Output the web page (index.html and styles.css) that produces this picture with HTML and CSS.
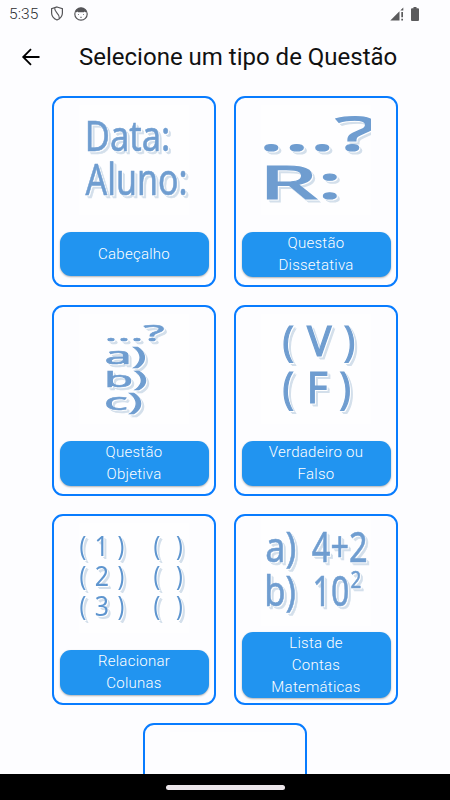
FILE: index.html
```html
<!DOCTYPE html>
<html lang="pt-BR">
<head>
<meta charset="utf-8">
<title>Selecione um tipo de Questão</title>
<link rel="stylesheet" href="styles.css">
</head>
<body>
<div class="screen">
  <header class="status">
    <span class="clock">5:35</span>
    <svg class="shield" width="14" height="15" viewBox="0 0 14 15"><path d="M7 1 12.400 2.700V7c0 3.400-2.200 5.700-5.400 7C3.800 12.700 1.600 10.400 1.600 7V2.700Z"/><path d="M4.800 2.200C3.800 6 9.600 7 9.300 12"/></svg>
    <svg class="face" width="14" height="14" viewBox="0 0 14 14"><circle cx="7" cy="7" r="6.200"/><path class="solid" d="M1.500 5C2 2.500 4.300.8 7 .8s5 1.700 5.500 4.200l-1.300.3-.7-.8-.6.7H4.100l-.6-.7-.7.8Z"/><path class="thin" d="M4.500 7v1M9.500 7v1M6 10.300h2"/></svg>
    <svg class="signal" width="14" height="14" viewBox="0 0 14 14"><path d="M.3 13.500 9.500 4.300v9.200ZM10.500 3.300 13.300.5v3h-2.800ZM11.300 5h1.700v5.300h-1.700ZM11.300 11.800h1.700v1.700h-1.700Z"/></svg>
    <svg class="battery" width="8" height="14" viewBox="0 0 8 14"><path d="M2.500 0h3v1.300H7q1 0 1 1V13q0 1-1 1H1q-1 0-1-1V2.300q0-1 1-1h1.500Z"/></svg>
  </header>
  <nav class="appbar">
    <svg class="back" width="20" height="18" viewBox="0 0 20 18"><path d="M18.500 9H2.200M10 1.200 2.200 9l7.800 7.800"/></svg>
    <h1>Selecione um tipo de Questão</h1>
  </nav>
  <main class="cards">
    <section class="card">
      <svg class="art" viewBox="0 0 110 110"><g>
        <text x="5.700" y="45.500" font-size="42" textLength="85.600" lengthAdjust="spacingAndGlyphs">Data:</text>
        <text x="6.600" y="90" font-size="43" textLength="102" lengthAdjust="spacingAndGlyphs">Aluno:</text>
      </g></svg>
      <button>Cabeçalho</button>
    </section>
    <section class="card">
      <svg class="art bold" viewBox="0 0 110 110"><g>
        <text x="-2.500" y="45.600" font-size="47" textLength="118" lengthAdjust="spacingAndGlyphs">...?</text>
        <text x="-2.100" y="94" font-size="46" textLength="83.500" lengthAdjust="spacingAndGlyphs">R:</text>
      </g></svg>
      <button>Questão<br>Dissetativa</button>
    </section>
    <section class="card">
      <svg class="art" viewBox="0 0 110 110"><g>
        <text x="25.600" y="27" font-size="22" textLength="60" lengthAdjust="spacingAndGlyphs">...?</text>
        <text x="25.400" y="49.700" font-size="23" textLength="42" lengthAdjust="spacingAndGlyphs">a)</text>
        <text x="25" y="73" font-size="22" textLength="43.500" lengthAdjust="spacingAndGlyphs">b)</text>
        <text x="25" y="95.700" font-size="23" textLength="38.700" lengthAdjust="spacingAndGlyphs">c)</text>
      </g></svg>
      <button>Questão<br>Objetiva</button>
    </section>
    <section class="card">
      <svg class="art bold" viewBox="0 0 110 110"><g>
        <text x="21.600" y="42.300" font-size="42" textLength="11.400" lengthAdjust="spacingAndGlyphs">(</text>
        <text x="45.900" y="42.300" font-size="42" textLength="24.500" lengthAdjust="spacingAndGlyphs">V</text>
        <text x="82.700" y="42.300" font-size="42" textLength="11.400" lengthAdjust="spacingAndGlyphs">)</text>
        <text x="21.600" y="88.500" font-size="43" textLength="11.400" lengthAdjust="spacingAndGlyphs">(</text>
        <text x="45.700" y="88.500" font-size="43" textLength="21" lengthAdjust="spacingAndGlyphs">F</text>
        <text x="78.400" y="88.500" font-size="43" textLength="11.400" lengthAdjust="spacingAndGlyphs">)</text>
      </g></svg>
      <button>Verdadeiro ou<br>Falso</button>
    </section>
    <section class="card">
      <svg class="art light" viewBox="0 0 110 110"><g>
        <text x=".6" y="32.700" font-size="28" textLength="6.800" lengthAdjust="spacingAndGlyphs">(</text>
        <text x="15.600" y="32.700" font-size="28" textLength="14.300" lengthAdjust="spacingAndGlyphs">1</text>
        <text x="38.600" y="32.700" font-size="28" textLength="6.800" lengthAdjust="spacingAndGlyphs">)</text>
        <text x="74.400" y="32.700" font-size="28" textLength="6.800" lengthAdjust="spacingAndGlyphs">(</text>
        <text x="97.100" y="32.700" font-size="28" textLength="6.800" lengthAdjust="spacingAndGlyphs">)</text>
        <text x=".6" y="62.700" font-size="28" textLength="6.800" lengthAdjust="spacingAndGlyphs">(</text>
        <text x="15.700" y="62.700" font-size="28" textLength="14.300" lengthAdjust="spacingAndGlyphs">2</text>
        <text x="38.600" y="62.700" font-size="28" textLength="6.800" lengthAdjust="spacingAndGlyphs">)</text>
        <text x="74.400" y="62.700" font-size="28" textLength="6.800" lengthAdjust="spacingAndGlyphs">(</text>
        <text x="97.100" y="62.700" font-size="28" textLength="6.800" lengthAdjust="spacingAndGlyphs">)</text>
        <text x=".6" y="92.500" font-size="28" textLength="6.800" lengthAdjust="spacingAndGlyphs">(</text>
        <text x="15.700" y="92.500" font-size="28" textLength="14.300" lengthAdjust="spacingAndGlyphs">3</text>
        <text x="38.600" y="92.500" font-size="28" textLength="6.800" lengthAdjust="spacingAndGlyphs">)</text>
        <text x="74.400" y="92.500" font-size="28" textLength="6.800" lengthAdjust="spacingAndGlyphs">(</text>
        <text x="97.100" y="92.500" font-size="28" textLength="6.800" lengthAdjust="spacingAndGlyphs">)</text>
      </g></svg>
      <button>Relacionar<br>Colunas</button>
    </section>
    <section class="card tall">
      <svg class="art" viewBox="0 0 110 110"><g>
        <text x="4.300" y="46" font-size="42" textLength="31" lengthAdjust="spacingAndGlyphs">a)</text>
        <text x="50.800" y="46" font-size="42" textLength="55.800" lengthAdjust="spacingAndGlyphs">4+2</text>
        <text x="3.300" y="89.700" font-size="42" textLength="31.700" lengthAdjust="spacingAndGlyphs">b)</text>
        <text x="51.600" y="89.700" font-size="42" textLength="36.600" lengthAdjust="spacingAndGlyphs">10</text>
        <text x="89.500" y="71.500" font-size="24" textLength="10.800" lengthAdjust="spacingAndGlyphs">2</text>
      </g></svg>
      <button>Lista de<br>Contas<br>Matemáticas</button>
    </section>
    <section class="card">
      <svg class="art" viewBox="0 0 110 110"></svg>
    </section>
  </main>
  <footer class="navbar"><span class="handle"></span></footer>
</div>
</body>
</html>
```
FILE: styles.css
```css
* { box-sizing: border-box; }
body { margin: 0; font-family: Roboto, sans-serif; background: #fdfdff; }
.screen { width: 450px; height: 800px; display: flex; flex-direction: column; overflow: hidden; }

.status { height: 27px; flex: none; display: flex; align-items: center; padding: 0 31px 0 9px; }
.status svg { fill: #5a5a5c; flex: none; }
.clock { width: 41px; font-size: 15.5px; font-weight: 300; letter-spacing: .1px; color: #2c2c30; }
.status .shield, .status .face { fill: none; stroke: #555558; stroke-width: 1.2; }
.status .solid { fill: #555558; stroke: none; }
.status .thin { stroke-width: .7; }
.face { margin-left: 10px; }
.signal { margin-left: auto; }
.battery { margin-left: 7px; }

.appbar { height: 60px; flex: none; display: flex; align-items: center; padding-left: 21px; }
.back { fill: none; stroke: #000; stroke-width: 1.8; }
h1 { margin: 0 0 1px 38px; font-size: 24px; font-weight: 400; line-height: 30px; color: #111; white-space: nowrap; }

.cards { flex: 1; min-height: 0; overflow: hidden; display: flex; flex-wrap: wrap; justify-content: center; align-content: flex-start; gap: 18px; padding: 9.300px 51px 0; }
.card { width: 164px; height: 191px; border: 2px solid #087cff; border-radius: 11px; display: flex; flex-direction: column; align-items: center; padding-top: 7px; }
.art { width: 110px; height: 110px; flex: none; background: #fefeff; overflow: hidden; }
.art g { filter: drop-shadow(1.200px 1.200px 0 #fff) drop-shadow(2.100px 2.100px 0 #d3dfeb); }
.art text { font-family: "Noto Sans", sans-serif; fill: #6f9dd0; stroke: #6f9dd0; stroke-width: .6px; }
.bold text { stroke-width: 1.200px; }
.light text { fill: #5e95cf; stroke: none; }
.light g { filter: drop-shadow(1px 1px 0 #fff) drop-shadow(2.300px 2.300px 0 #d3dfeb); }

button { width: 149px; min-height: 44px; margin: 17px 0 0; padding: 1px 0 0; border: 0; border-radius: 11px; background: #2194f0; box-shadow: 0 1px 2px rgba(0, 0, 0, .3); color: #fff; font: 300 15px/21.700px Roboto, sans-serif; letter-spacing: .25px; }
.tall { padding-top: 0; }
.tall button { min-height: 66px; margin-top: 6px; }

.navbar { height: 26px; flex: none; background: #000; display: flex; align-items: center; justify-content: center; }
.handle { width: 119px; height: 5px; border-radius: 3px; background: #ece6ea; }
```
